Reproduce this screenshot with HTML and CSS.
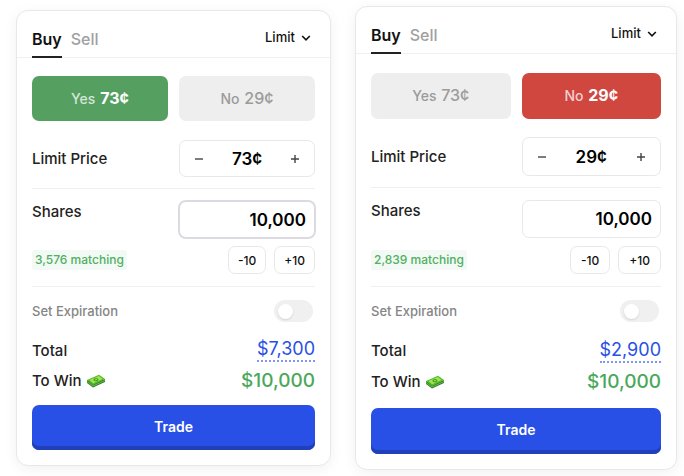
FILE: index.html
```html
<!DOCTYPE html>
<html lang="en">
<head>
    <meta charset="UTF-8">
    <meta name="viewport" content="width=device-width, initial-scale=1.0">
    <title>Trade</title>
    <link rel="stylesheet" href="styles.css">
</head>
<body>
    <main class="panels">
        <form class="card">
            <header class="card-header">
                <nav class="tabs">
                    <a href="#buy" class="tab active">Buy</a>
                    <a href="#sell" class="tab">Sell</a>
                </nav>
                <div class="order-type">
                    <select aria-label="Order type">
                        <option>Limit</option>
                    </select>
                    <svg class="chevron" viewBox="0 0 10 6" aria-hidden="true"><path d="M1.2 1l3.8 3.8L8.8 1"/></svg>
                </div>
            </header>
            <div class="card-body">
                <div class="outcomes">
                    <button type="button" class="outcome yes">Yes <strong>73¢</strong></button>
                    <button type="button" class="outcome">No <strong>29¢</strong></button>
                </div>
                <div class="row price-row">
                    <label class="label" for="priceYes">Limit Price</label>
                    <div class="stepper">
                        <button type="button" aria-label="Decrease price"><svg viewBox="0 0 10 10"><path d="M1 5h8"/></svg></button>
                        <input type="text" id="priceYes" value="73¢">
                        <button type="button" aria-label="Increase price"><svg viewBox="0 0 10 10"><path d="M1 5h8M5 1v8"/></svg></button>
                    </div>
                </div>
                <div class="shares">
                    <div class="row">
                        <label class="label shares-label" for="sharesYes">Shares</label>
                        <input type="text" id="sharesYes" class="shares-input focused" value="10,000">
                    </div>
                    <div class="shares-footer">
                        <span class="matching">3,576 matching</span>
                        <button type="button" class="chip">-10</button>
                        <button type="button" class="chip">+10</button>
                    </div>
                </div>
                <div class="expiration">
                    <label for="expireYes">Set Expiration</label>
                    <input type="checkbox" id="expireYes" class="toggle">
                </div>
                <div class="summary">
                    <span class="label">Total</span>
                    <span class="total">$7,300</span>
                </div>
                <div class="summary">
                    <span class="label">To Win
                        <svg class="cash" viewBox="0 0 20 14" aria-hidden="true">
                            <path d="M1 6v3l6 4.5L19 8V5L8 9z" fill="#2f7d22"/>
                            <path d="M1 7.5l6 4.5 12-5.5" fill="none" stroke="#a5d477" stroke-width=".6"/>
                            <path d="M1 6L13 .8 19 5 7 11z" fill="#50bd2b"/>
                            <path d="M3.5 6L12.8 2l3.8 3L7.2 9.3z" fill="#a4e34f"/>
                            <ellipse cx="10" cy="5.7" rx="2.6" ry="1.8" fill="#46a52a"/>
                            <path d="M9 5.9l2-.5" stroke="#b7ec6c" stroke-width=".8"/>
                        </svg>
                    </span>
                    <span class="to-win">$10,000</span>
                </div>
                <button type="button" class="trade">Trade</button>
            </div>
        </form>

        <form class="card card-large">
            <header class="card-header">
                <nav class="tabs">
                    <a href="#buy" class="tab active">Buy</a>
                    <a href="#sell" class="tab">Sell</a>
                </nav>
                <div class="order-type">
                    <select aria-label="Order type">
                        <option>Limit</option>
                    </select>
                    <svg class="chevron" viewBox="0 0 10 6" aria-hidden="true"><path d="M1.2 1l3.8 3.8L8.8 1"/></svg>
                </div>
            </header>
            <div class="card-body">
                <div class="outcomes">
                    <button type="button" class="outcome">Yes <strong>73¢</strong></button>
                    <button type="button" class="outcome no">No <strong>29¢</strong></button>
                </div>
                <div class="row price-row">
                    <label class="label" for="priceNo">Limit Price</label>
                    <div class="stepper">
                        <button type="button" aria-label="Decrease price"><svg viewBox="0 0 10 10"><path d="M1 5h8"/></svg></button>
                        <input type="text" id="priceNo" value="29¢">
                        <button type="button" aria-label="Increase price"><svg viewBox="0 0 10 10"><path d="M1 5h8M5 1v8"/></svg></button>
                    </div>
                </div>
                <div class="shares">
                    <div class="row">
                        <label class="label shares-label" for="sharesNo">Shares</label>
                        <input type="text" id="sharesNo" class="shares-input" value="10,000">
                    </div>
                    <div class="shares-footer">
                        <span class="matching">2,839 matching</span>
                        <button type="button" class="chip">-10</button>
                        <button type="button" class="chip">+10</button>
                    </div>
                </div>
                <div class="expiration">
                    <label for="expireNo">Set Expiration</label>
                    <input type="checkbox" id="expireNo" class="toggle">
                </div>
                <div class="summary">
                    <span class="label">Total</span>
                    <span class="total">$2,900</span>
                </div>
                <div class="summary">
                    <span class="label">To Win
                        <svg class="cash" viewBox="0 0 20 14" aria-hidden="true">
                            <path d="M1 6v3l6 4.5L19 8V5L8 9z" fill="#2f7d22"/>
                            <path d="M1 7.5l6 4.5 12-5.5" fill="none" stroke="#a5d477" stroke-width=".6"/>
                            <path d="M1 6L13 .8 19 5 7 11z" fill="#50bd2b"/>
                            <path d="M3.5 6L12.8 2l3.8 3L7.2 9.3z" fill="#a4e34f"/>
                            <ellipse cx="10" cy="5.7" rx="2.6" ry="1.8" fill="#46a52a"/>
                            <path d="M9 5.9l2-.5" stroke="#b7ec6c" stroke-width=".8"/>
                        </svg>
                    </span>
                    <span class="to-win">$10,000</span>
                </div>
                <button type="button" class="trade">Trade</button>
            </div>
        </form>
    </main>
</body>
</html>
```

FILE: styles.css
```css
* {
    box-sizing: border-box;
}

body {
    margin: 0;
    background: #fff;
    color: #222;
    font-family: Inter, "Liberation Sans", sans-serif;
    font-size: 14px;
    font-weight: 500;
}

button, input, select {
    font: inherit;
    color: inherit;
    margin: 0;
}

button {
    cursor: pointer;
    padding: 0;
}

.panels {
    display: grid;
    grid-template-columns: 315fr 322fr;
    align-items: start;
    gap: 24px;
    padding: 6px 7px 6px 16px;
}

.card {
    --outcome-height: 45px;
    --control-height: 37px;
    --shares-height: 37px;
    --summary-height: 30px;
    --trade-height: 45px;
    --body-top: 18px;
    --price-top: 19px;
    --trade-gap: 10px;
    --chip-padding: 9px;
    min-width: 0;
    margin-top: 4px;
    background: #fff;
    border: 1px solid #e8e8e8;
    border-radius: 12px;
    box-shadow: 0 3px 14px rgba(0, 0, 0, 0.06);
}

.card-large {
    --outcome-height: 46px;
    --control-height: 39px;
    --shares-height: 38px;
    --summary-height: 31px;
    --trade-height: 46px;
    --body-top: 19px;
    --price-top: 18px;
    --trade-gap: 11px;
    --chip-padding: 10px;
    margin-top: 0;
}

/* header */
.card-header {
    display: flex;
    justify-content: space-between;
    height: 47px;
    padding: 0 19px 0 15px;
    border-bottom: 1px solid #f0f0f0;
}

.tabs {
    display: flex;
    gap: 9px;
}

.tab {
    height: 47px;
    padding-top: 9px;
    line-height: 38px;
    font-size: 16px;
    color: #a0a0a0;
    text-decoration: none;
}

.tab.active {
    color: #111;
    font-weight: 600;
    border-bottom: 2px solid #222;
}

.order-type {
    position: relative;
    padding-top: 6px;
}

.order-type select {
    appearance: none;
    height: 40px;
    padding: 0 16px 0 0;
    border: 0;
    background: none;
    color: #111;
    font-size: 13px;
}

.chevron {
    position: absolute;
    right: 0;
    top: 24px;
    width: 10px;
    height: 6px;
    fill: none;
    stroke: #111;
    stroke-width: 1.6;
    pointer-events: none;
}

.card-body {
    padding: var(--body-top) 15px 15px;
}

.outcomes, .row {
    display: grid;
    grid-template-columns: repeat(2, minmax(0, 1fr));
    gap: 11px;
}

.outcome {
    height: var(--outcome-height);
    padding-bottom: 2px;
    border: 0;
    border-radius: 7px;
    background: #eee;
    color: #9b9b9b;
}

.outcome strong {
    margin-left: 1px;
    font-size: 16px;
    font-weight: 500;
}

.outcome.yes, .outcome.no {
    color: rgba(255, 255, 255, 0.75);
}

.outcome.yes {
    background: #559f60;
}

.outcome.no {
    background: #d0473f;
}

.outcome.yes strong, .outcome.no strong {
    color: #fff;
    font-weight: 700;
}

.label {
    font-size: 15px;
}

/* price and shares */
.price-row {
    align-items: center;
    padding: var(--price-top) 0 11px;
    border-bottom: 1px solid #f0f0f0;
}

.stepper {
    display: flex;
    height: var(--control-height);
    border: 1px solid #e8e8e8;
    border-radius: 7px;
}

.stepper button {
    flex: 0 0 38px;
    border: 0;
    background: none;
}

.stepper svg {
    width: 10px;
    height: 10px;
    stroke: #444;
    stroke-width: 1.4;
}

.stepper input {
    flex: 1;
    min-width: 0;
    padding: 0;
    border: 0;
    background: none;
    color: #000;
    font-size: 17px;
    font-weight: 600;
    text-align: center;
}

.shares {
    padding: 12px 0;
    border-bottom: 1px solid #f0f0f0;
}

.shares-label {
    line-height: 22px;
}

.shares-input {
    width: 100%;
    height: var(--shares-height);
    padding: 0 8px;
    border: 1px solid #e8e8e8;
    border-radius: 7px;
    color: #000;
    font-size: 17px;
    font-weight: 600;
    text-align: right;
}

.shares-input.focused {
    border-color: #dadae0;
    box-shadow: 0 0 0 1px #dadae0;
}

.shares-footer {
    display: flex;
    align-items: center;
    gap: 8px;
    margin-top: 8px;
}

.matching {
    margin-right: auto;
    padding: 0 3px;
    border-radius: 3px;
    background: #f3f9f4;
    color: #4fb062;
    font-size: 12px;
    line-height: 20px;
}

.chip {
    height: 28px;
    padding: 0 var(--chip-padding);
    border: 1px solid #e8e8e8;
    border-radius: 7px;
    background: #fff;
    color: #111;
    font-size: 12px;
}

.expiration {
    display: flex;
    align-items: center;
    justify-content: space-between;
    padding: 13px 2px 13px 0;
    color: #858585;
    font-size: 13px;
}

.toggle {
    appearance: none;
    display: flex;
    align-items: center;
    width: 39px;
    height: 22px;
    padding: 0 4px;
    border-radius: 11px;
    background: #f0f0f0;
    cursor: pointer;
}

.toggle::before {
    content: "";
    width: 15px;
    height: 15px;
    border-radius: 50%;
    background: #fff;
    box-shadow: 0 1px 2px rgba(0, 0, 0, 0.12);
}

.toggle:checked {
    justify-content: flex-end;
    background: #2950e6;
}

/* totals */
.summary {
    display: flex;
    align-items: center;
    justify-content: space-between;
    height: var(--summary-height);
}

.total {
    border-bottom: 2px dotted #7f97f2;
    color: #2950e6;
    font-size: 18px;
    font-weight: 400;
    line-height: 22px;
}

.to-win {
    color: #4aa85b;
    font-size: 19px;
}

.cash {
    width: 20px;
    height: 14px;
    vertical-align: -2px;
}

.trade {
    width: 100%;
    height: var(--trade-height);
    margin-top: var(--trade-gap);
    padding-bottom: 3px;
    border: 0;
    border-radius: 7px;
    background: #2950e6;
    box-shadow: inset 0 -4px 0 #213fb9;
    color: #fff;
    font-weight: 600;
    display: block;
}
```
